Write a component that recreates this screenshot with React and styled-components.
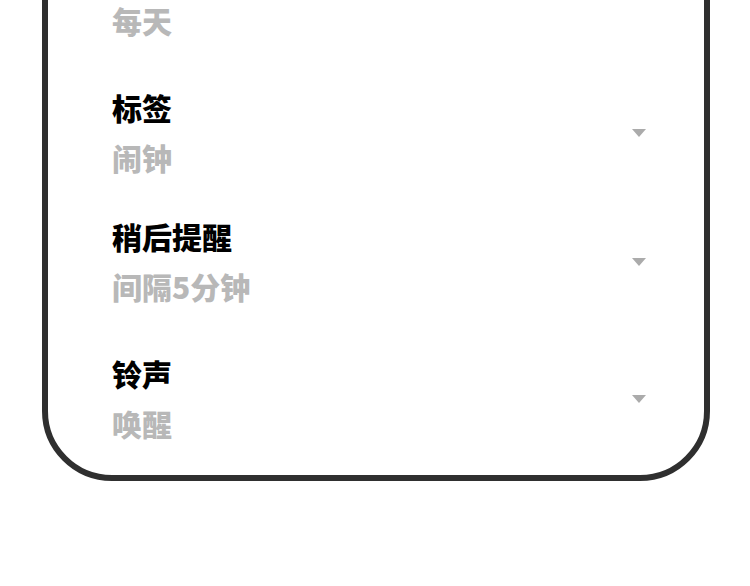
import React from "react";
import styled, { createGlobalStyle } from "styled-components";

const Global = createGlobalStyle`
  html, body { margin: 0; padding: 0; background: #ffffff; overflow: hidden; }
  body { font-family: "Noto Sans CJK SC", "Noto Sans", sans-serif; }
`;

const Page = styled.div`
  width: 750px;
  height: 586px;
  overflow: hidden;
`;

const Frame = styled.div`
  margin: -100px 0 0 42px;
  width: 668px;
  box-sizing: border-box;
  border: 6px solid #2f2f2f;
  border-radius: 70px;
  padding: 39.3px 58px 26.7px 64px;
  display: flex;
  flex-direction: column;
`;

const Row = styled.div`
  display: flex;
  align-items: center;
  justify-content: space-between;
  margin-top: ${(p) => p.$gap || 0}px;
`;

const Texts = styled.div`
  display: flex;
  flex-direction: column;
`;

const Title = styled.div`
  font-size: 30px;
  line-height: 50px;
  font-weight: 900;
  color: #000000;
`;

const Value = styled.div`
  font-size: 30px;
  line-height: 50px;
  font-weight: 900;
  color: #b8b8b8;
`;

const Caret = styled.div`
  width: 0;
  height: 0;
  margin-top: 1px;
  border-left: 7px solid transparent;
  border-right: 7px solid transparent;
  border-top: 8px solid #ababab;
`;

const rows = [
  { title: "重复", value: "每天", gap: 0 },
  { title: "标签", value: "闹钟", gap: 37 },
  { title: "稍后提醒", value: "间隔5分钟", gap: 29 },
  { title: "铃声", value: "唤醒", gap: 37 },
];

export default function App() {
  return (
    <Page>
      <Global />
      <Frame>
        {rows.map((r) => (
          <Row key={r.title} $gap={r.gap}>
            <Texts>
              <Title>{r.title}</Title>
              <Value>{r.value}</Value>
            </Texts>
            <Caret />
          </Row>
        ))}
      </Frame>
    </Page>
  );
}
